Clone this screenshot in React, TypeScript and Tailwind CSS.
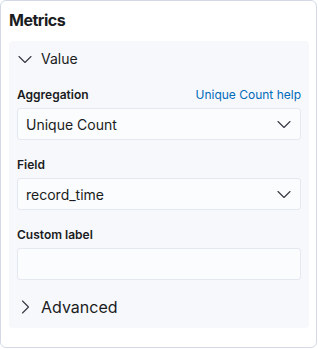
import React from "react";

function ChevronDown({ className }: { className?: string }) {
  return (
    <svg viewBox="0 0 16 16" width="16" height="16" className={className} fill="none">
      <polyline points="2,5.5 8,11.5 14,5.5" stroke="#343741" strokeWidth="1.1" strokeLinecap="round" strokeLinejoin="round" />
    </svg>
  );
}

function ChevronRight({ className }: { className?: string }) {
  return (
    <svg viewBox="0 0 16 16" width="16" height="16" className={className} fill="none">
      <polyline points="5.5,2 11.5,8 5.5,14" stroke="#343741" strokeWidth="1.1" strokeLinecap="round" strokeLinejoin="round" />
    </svg>
  );
}

function Select({ value }: { value: string }) {
  return (
    <div className="flex h-[32px] items-center justify-between rounded-[3px] border border-[#e4e8f1] bg-[#fbfcfd] pl-2 pr-2">
      <span className="pt-[1px] text-[14px] leading-[20px] text-[#1a1c21]">{value}</span>
      <ChevronDown />
    </div>
  );
}

function Label({ children, right }: { children: React.ReactNode; right?: React.ReactNode }) {
  return (
    <div className="flex h-[18px] items-center justify-between">
      <span className="text-[12px] font-semibold leading-[18px] text-[#1a1c21]">{children}</span>
      {right}
    </div>
  );
}

export default function App() {
  return (
    <div className="h-[349px] w-[318px] bg-white" style={{ fontFamily: "Inter, 'Noto Sans', sans-serif" }}>
      <div className="flex h-[348px] w-[317px] flex-col rounded-[6px] border border-[#d3dae6] bg-white pl-2 pt-[7px]">
        <h2 className="text-[16px] font-bold leading-[24px] tracking-[-0.5px] text-[#1a1c21]">Metrics</h2>
        <div className="mt-[9px] w-[300px] rounded-[4px] bg-[#f7f8fc] px-2 pb-[9px] pt-[6px]">
          <div className="flex h-[24px] items-center gap-2">
            <ChevronDown />
            <span className="text-[14px] leading-[24px] text-[#1a1c21]">Value</span>
          </div>
          <div className="mt-[15px] flex flex-col gap-1">
            <Label right={<span className="text-[12px] leading-[18px] text-[#006bb8]">Unique Count help</span>}>
              Aggregation
            </Label>
            <Select value="Unique Count" />
          </div>
          <div className="mt-4 flex flex-col gap-1">
            <Label>Field</Label>
            <Select value="record_time" />
          </div>
          <div className="mt-4 flex flex-col gap-1">
            <Label>Custom label</Label>
            <div className="h-[32px] rounded-[3px] border border-[#e4e8f1] bg-[#fbfcfd]" />
          </div>
          <div className="mt-[15px] flex h-[24px] items-center gap-2">
            <ChevronRight />
            <span className="text-[16px] leading-[24px] text-[#1a1c21]">Advanced</span>
          </div>
        </div>
      </div>
    </div>
  );
}
